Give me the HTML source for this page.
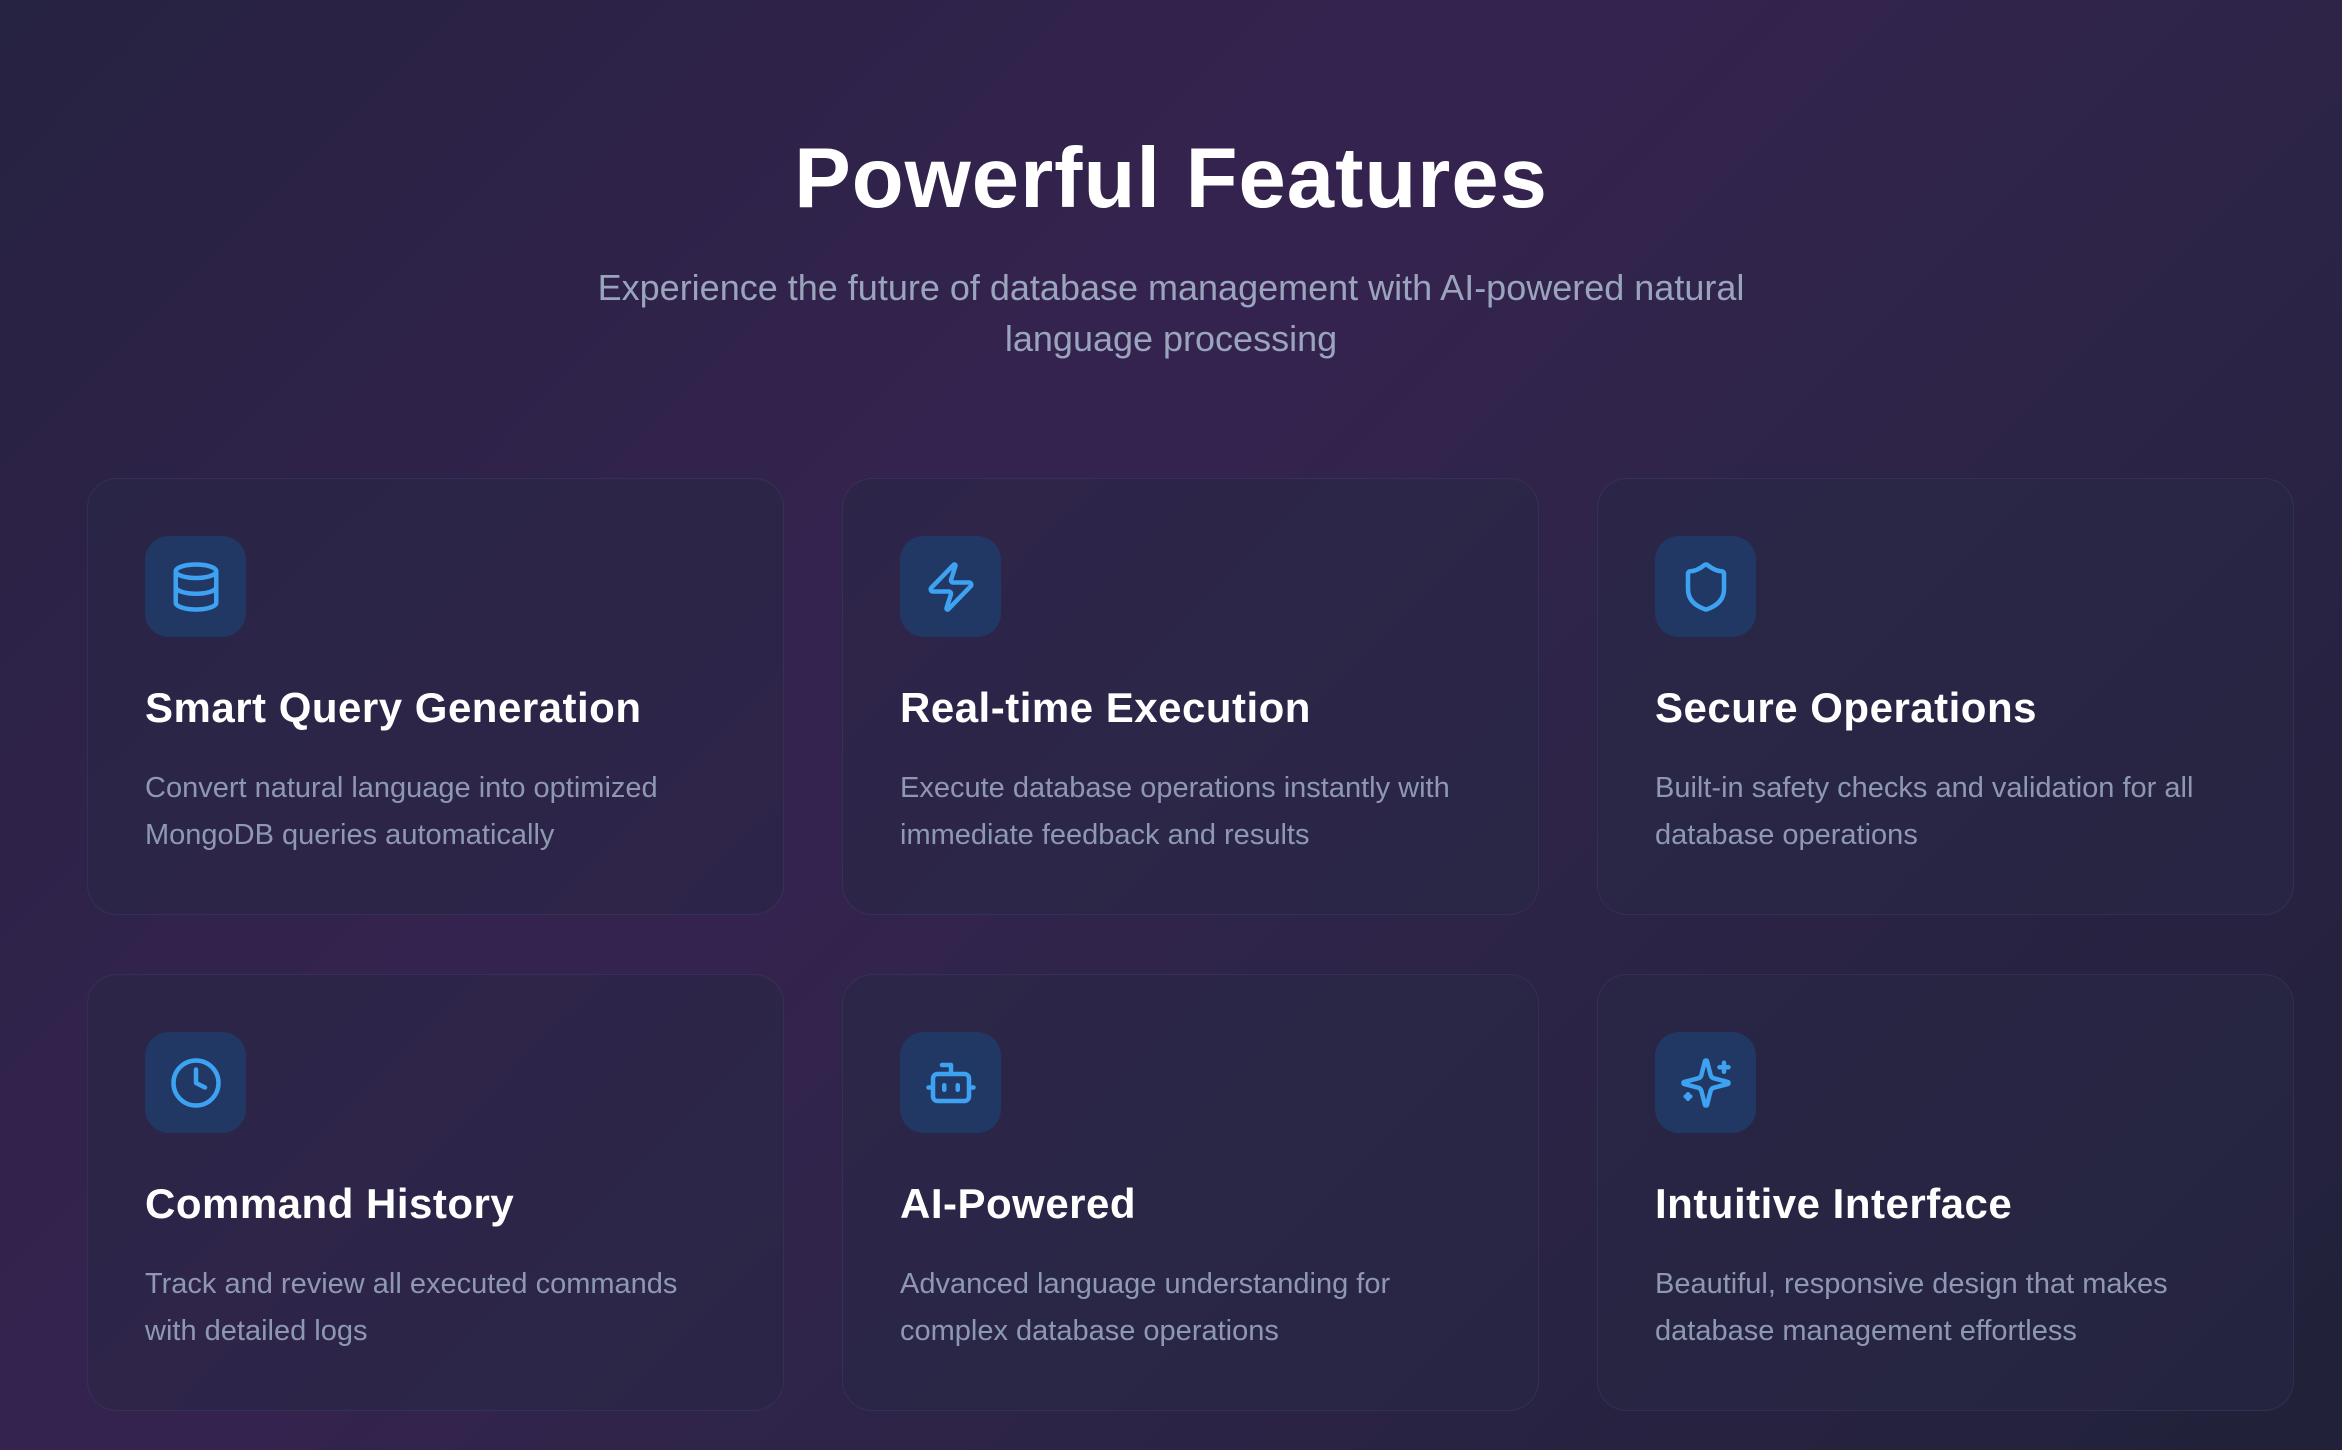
<!DOCTYPE html>
<html><head><meta charset="utf-8"><style>
*{margin:0;padding:0;box-sizing:border-box}
body{width:2342px;height:1450px;overflow:hidden;font-family:"Liberation Sans",sans-serif;
background:linear-gradient(135deg,#262241 0%,#35234f 40%,#2e2449 60%,#212139 100%);position:relative}
h1{position:absolute;top:130px;left:0;width:100%;text-align:center;color:#fff;font-size:85px;font-weight:bold;letter-spacing:1px}
.sub{position:absolute;top:262px;left:571px;width:1200px;text-align:center;color:#9aa5bd;font-size:36px;line-height:51px}
.card{position:absolute;width:697px;height:437px;border-radius:30px;background:rgba(40,40,70,.55);border:1.5px solid rgba(120,130,170,.12)}
.ic{position:absolute;left:57px;top:57px;width:101px;height:101px;border-radius:24px;background:#213864;display:flex;align-items:center;justify-content:center}
.ic svg{width:54px;height:54px;fill:none;stroke:#3ea2f2;stroke-width:2;stroke-linecap:round;stroke-linejoin:round}
.t{position:absolute;left:57px;top:205px;color:#fff;font-size:42px;font-weight:bold;letter-spacing:.5px}
.d{position:absolute;left:57px;top:286px;width:560px;color:#8e99b1;font-size:29px;line-height:47px}
</style></head><body>
<h1>Powerful Features</h1>
<div class="sub">Experience the future of database management with AI-powered natural language processing</div>

<div class="card" style="left:87px;top:478px"><div class="ic"><svg viewBox="0 0 24 24"><ellipse cx="12" cy="5" rx="9" ry="3"/><path d="M3 5v14a9 3 0 0 0 18 0V5"/><path d="M3 12a9 3 0 0 0 18 0"/></svg></div><div class="t">Smart Query Generation</div><div class="d">Convert natural language into optimized MongoDB queries automatically</div></div>

<div class="card" style="left:842px;top:478px"><div class="ic"><svg viewBox="0 0 24 24"><path d="M4 14a1 1 0 0 1-.78-1.63l9.9-10.2a.5.5 0 0 1 .86.46l-1.92 6.020A1 1 0 0 0 13 10h7a1 1 0 0 1 .78 1.63l-9.9 10.2a.5.5 0 0 1-.86-.46l1.92-6.02A1 1 0 0 0 11 14z"/></svg></div><div class="t">Real-time Execution</div><div class="d">Execute database operations instantly with immediate feedback and results</div></div>

<div class="card" style="left:1597px;top:478px"><div class="ic"><svg viewBox="0 0 24 24"><path d="M20 13c0 5-3.5 7.5-7.66 8.95a1 1 0 0 1-.67-.01C7.5 20.5 4 18 4 13V6a1 1 0 0 1 1-1c2 0 4.5-1.2 6.24-2.72a1.170 1.17 0 0 1 1.52 0C14.51 3.81 17 5 19 5a1 1 0 0 1 1 1z"/></svg></div><div class="t">Secure Operations</div><div class="d">Built-in safety checks and validation for all database operations</div></div>

<div class="card" style="left:87px;top:974px"><div class="ic"><svg viewBox="0 0 24 24"><circle cx="12" cy="12" r="10"/><path d="M12 6v6l4 2"/></svg></div><div class="t">Command History</div><div class="d">Track and review all executed commands with detailed logs</div></div>

<div class="card" style="left:842px;top:974px"><div class="ic"><svg viewBox="0 0 24 24"><path d="M12 8V4H8"/><rect width="16" height="12" x="4" y="8" rx="2"/><path d="M2 14h2M20 14h2M15 13v2M9 13v2"/></svg></div><div class="t">AI-Powered</div><div class="d">Advanced language understanding for complex database operations</div></div>

<div class="card" style="left:1597px;top:974px"><div class="ic"><svg viewBox="0 0 24 24"><path d="M9.94 15.5A2 2 0 0 0 8.5 14.06l-6.14-1.58a.5.5 0 0 1 0-.96L8.5 9.94A2 2 0 0 0 9.94 8.5l1.58-6.14a.5.5 0 0 1 .96 0L14.06 8.5A2 2 0 0 0 15.5 9.94l6.14 1.58a.5.5 0 0 1 0 .96L15.5 14.06a2 2 0 0 0-1.44 1.44l-1.58 6.14a.5.5 0 0 1-.96 0z"/><path d="M20 3v4M22 5h-4M4 17v2M5 18H3"/></svg></div><div class="t">Intuitive Interface</div><div class="d">Beautiful, responsive design that makes database management effortless</div></div>
</body></html>
